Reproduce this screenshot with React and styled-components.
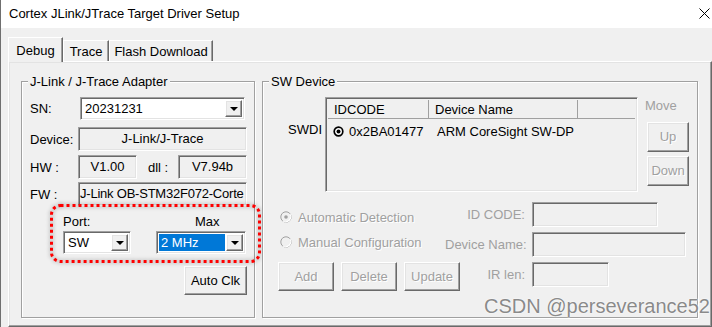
import React from 'react';
import styled, { createGlobalStyle, css } from 'styled-components';

const Global = createGlobalStyle`
  html, body { margin: 0; padding: 0; background: #f0f0f0; }
  body { font-family: "Liberation Sans", Arial, sans-serif; font-size: 13px; color: #000; }
  * { box-sizing: border-box; }
`;

const sunken = css`
  border: 1px solid;
  border-color: #a0a0a0 #ffffff #ffffff #a0a0a0;
  box-shadow: inset 1px 1px 0 #696969, inset -1px -1px 0 #e3e3e3;
`;

const raised = css`
  border: 1px solid;
  border-color: #ffffff #696969 #696969 #ffffff;
  box-shadow: inset -1px -1px 0 #a0a0a0, inset 1px 1px 0 #e3e3e3;
`;

const Window = styled.div`
  position: relative;
  width: 712px;
  height: 327px;
  overflow: hidden;
  background: #f0f0f0;
  border-left: 1px solid #6f6f6f;
  display: flex;
  flex-direction: column;
`;

const TitleBar = styled.div`
  height: 28px;
  flex: none;
  background: #ffffff;
  display: flex;
  align-items: center;
  justify-content: space-between;
  padding: 0 2px 1px 8px;
  font-size: 13px;
  color: #000;
`;

const Body = styled.div`
  flex: 1;
  display: flex;
  flex-direction: column;
  padding: 9px 0 0 7px;
  min-height: 0;
`;

const TabStrip = styled.div`
  height: 24px;
  flex: none;
  display: flex;
  align-items: flex-end;
`;

const Tab = styled.div`
  position: relative;
  z-index: ${p => (p.$active ? 2 : 1)};
  width: ${p => p.$w}px;
  height: ${p => (p.$active ? 25 : 21)}px;
  margin-bottom: ${p => (p.$active ? -1 : 0)}px;
  background: #f0f0f0;
  border: 1px solid;
  border-bottom: none;
  border-color: #ffffff #696969 #696969 #ffffff;
  box-shadow: inset -1px 0 0 #a0a0a0;
  display: flex;
  align-items: center;
  justify-content: center;
  font-size: 13px;
  padding-top: ${p => (p.$active ? 0 : 1)}px;
  white-space: nowrap;
`;

const Panel = styled.div`
  flex: 1;
  border: 1px solid;
  border-color: #ffffff #696969 #696969 #ffffff;
  box-shadow: inset -1px -1px 0 #a0a0a0, inset 1px 1px 0 #e3e3e3;
  padding: 19px 0 0 12px;
  display: flex;
  gap: 7px;
  align-items: flex-start;
`;

const Group = styled.div`
  position: relative;
  width: ${p => p.$w}px;
  height: 237px;
  flex: none;
  border: 1px solid #a0a0a0;
  box-shadow: inset 1px 1px 0 #ffffff, 1px 1px 0 #ffffff;
  padding: ${p => p.$pad};
  display: flex;
  flex-direction: column;
`;

const Legend = styled.span`
  position: absolute;
  top: -8px;
  left: 6px;
  padding: 0 2px;
  line-height: 15px;
  background: #f0f0f0;
  white-space: nowrap;
`;

const Row = styled.div`
  display: flex;
  align-items: center;
  margin-top: ${p => p.$mt || 0}px;
`;

const Label = styled.span`
  flex: none;
  width: ${p => p.$w}px;
  line-height: 15px;
  white-space: nowrap;
  padding-left: ${p => p.$pl || 0}px;
  color: ${p => (p.$dim ? '#a0a0a0' : '#000')};
  text-align: ${p => p.$align || 'left'};
`;

const ReadBox = styled.div`
  ${sunken};
  width: ${p => p.$w}px;
  height: 24px;
  flex: none;
  background: #f0f0f0;
  display: flex;
  align-items: center;
  justify-content: ${p => (p.$left ? 'flex-start' : 'center')};
  padding: 0 ${p => (p.$left ? 1 : 2)}px 2px ${p => (p.$left ? 1 : 2)}px;
  white-space: nowrap;
  overflow: hidden;
  letter-spacing: ${p => (p.$tight ? '-0.22px' : 'normal')};
`;

const Combo = styled.div`
  ${sunken};
  width: ${p => p.$w}px;
  height: 23px;
  flex: none;
  background: #ffffff;
  display: flex;
  align-items: stretch;
  padding: 2px;
`;

const ComboText = styled.div`
  flex: 1;
  display: flex;
  align-items: center;
  padding: 0 2px;
  margin-right: 1px;
  background: ${p => (p.$selected ? '#0078d7' : 'transparent')};
  color: ${p => (p.$selected ? '#ffffff' : '#000')};
  white-space: nowrap;
  overflow: hidden;
`;

const DropButton = styled.div`
  ${raised};
  width: 17px;
  flex: none;
  background: #f0f0f0;
  display: flex;
  align-items: center;
  justify-content: center;
`;

const Arrow = styled.span`
  width: 0;
  height: 0;
  border-left: 4px solid transparent;
  border-right: 4px solid transparent;
  border-top: 4px solid #000;
`;

const PortArea = styled.div`
  display: flex;
  gap: 25px;
  margin-top: 8px;
  padding-left: 33px;
`;

const PortCol = styled.div`
  display: flex;
  flex-direction: column;
  gap: 2px;
`;

const Button = styled.button`
  ${raised};
  width: ${p => p.$w}px;
  height: ${p => p.$h}px;
  flex: none;
  margin: ${p => p.$m || 0};
  align-self: ${p => p.$self || 'auto'};
  padding: 0 0 1px 0;
  background: #f0f0f0;
  font: 13px "Liberation Sans", Arial, sans-serif;
  color: ${p => (p.disabled ? '#a0a0a0' : '#000')};
  text-shadow: ${p => (p.disabled ? '1px 1px 0 #ffffff' : 'none')};
`;

const Annotation = styled.svg`
  position: absolute;
  left: 28px;
  top: 122px;
  overflow: visible;
  filter: drop-shadow(0 0 2px rgba(0, 0, 0, 0.45));
  pointer-events: none;
`;

const TopSection = styled.div`
  display: flex;
  align-items: flex-start;
`;

const SideLabel = styled.span`
  width: 59px;
  flex: none;
  text-align: right;
  padding-top: 25px;
  line-height: 15px;
`;

const List = styled.div`
  ${sunken};
  width: 313px;
  height: 95px;
  margin-left: 3px;
  flex: none;
  background: #f0f0f0;
  padding: 2px;
  display: flex;
  flex-direction: column;
`;

const ListHeader = styled.div`
  display: flex;
  height: 19px;
  border-bottom: 1px solid #a0a0a0;
`;

const HeadCell = styled.div`
  width: ${p => (p.$w ? `${p.$w}px` : 'auto')};
  flex: ${p => (p.$w ? 'none' : '1')};
  border-right: ${p => (p.$last ? 'none' : '1px solid #a0a0a0')};
  padding-left: 6px;
  display: flex;
  align-items: center;
  white-space: nowrap;
`;

const ListRow = styled.div`
  display: flex;
  height: 18px;
  margin-top: 3px;
  align-items: center;
`;

const Cell = styled.div`
  width: ${p => p.$w}px;
  flex: none;
  display: flex;
  align-items: center;
  gap: 5px;
  padding-left: ${p => p.$pl}px;
  white-space: nowrap;
`;

const MoveCol = styled.div`
  display: flex;
  flex-direction: column;
  align-items: flex-start;
  margin-left: 7px;
  padding-top: 1px;
`;

const MoveLabel = styled.span`
  line-height: 15px;
  color: #a0a0a0;
`;

const BottomSection = styled.div`
  display: flex;
  margin-top: 10px;
`;

const OptionsCol = styled.div`
  width: 182px;
  flex: none;
  padding: 5px 0 0 15px;
  display: flex;
  flex-direction: column;
`;

const RadioRow = styled.label`
  height: 20px;
  margin-bottom: 5px;
  padding-left: 2px;
  display: flex;
  align-items: center;
  gap: 6px;
  color: #a0a0a0;
  text-shadow: 1px 1px 0 #ffffff;
  white-space: nowrap;
`;

const ButtonRow = styled.div`
  display: flex;
  gap: 7px;
  margin-top: 5px;
`;

const FieldGrid = styled.div`
  display: grid;
  grid-template-columns: 80px auto;
  grid-auto-rows: 25px;
  column-gap: 7px;
  row-gap: 5px;
  align-items: center;
`;

const FieldBox = styled.div`
  ${sunken};
  width: ${p => p.$w}px;
  height: 25px;
  background: #f0f0f0;
`;

const Watermark = styled.div`
  position: absolute;
  left: 483px;
  top: 295px;
  font: 20px "Liberation Sans", Arial, sans-serif;
  line-height: 22px;
  color: #8a8a8a;
  text-shadow: 0 0 2px #ffffff, 0 0 1px #ffffff;
  white-space: nowrap;
  pointer-events: none;
`;

function CloseIcon() {
  return (
    <svg width="11" height="11" viewBox="0 0 11 11">
      <path d="M0.5 0.5 L10.5 10.5 M10.5 0.5 L0.5 10.5" stroke="#000" strokeWidth="1" fill="none" />
    </svg>
  );
}

function ListRadio() {
  return (
    <svg width="11" height="11" viewBox="0 0 11 11">
      <circle cx="5.5" cy="5.5" r="4.3" stroke="#000" strokeWidth="1.7" fill="#fff" />
      <circle cx="5.5" cy="5.5" r="2" fill="#000" />
    </svg>
  );
}

function DimRadio({ checked }) {
  return (
    <svg width="12" height="12" viewBox="0 0 12 12">
      <circle cx="6" cy="6" r="5.2" fill="#f0f0f0" stroke="#a0a0a0" strokeWidth="1" />
      <path d="M10.2 3.2 A5.2 5.2 0 0 1 3.2 10.2" stroke="#ffffff" strokeWidth="1.2" fill="none" />
      {checked && <circle cx="6" cy="6" r="1.8" fill="#a0a0a0" />}
    </svg>
  );
}

function ComboBox({ w, text, selected }) {
  return (
    <Combo $w={w}>
      <ComboText $selected={selected}>{text}</ComboText>
      <DropButton>
        <Arrow />
      </DropButton>
    </Combo>
  );
}

export default function App() {
  return (
    <>
      <Global />
      <Window>
        <TitleBar>
          <span>Cortex JLink/JTrace Target Driver Setup</span>
          <CloseIcon />
        </TitleBar>
        <Body>
          <TabStrip>
            <Tab $active $w={55}>Debug</Tab>
            <Tab $w={46}>Trace</Tab>
            <Tab $w={104}>Flash Download</Tab>
          </TabStrip>
          <Panel>
            <Group $w={234} $pad="15px 0 0 8px">
              <Legend>J-Link / J-Trace Adapter</Legend>
              <Row>
                <Label $w={50}>SN:</Label>
                <ComboBox w={165} text="20231231" />
              </Row>
              <Row $mt={7}>
                <Label $w={48}>Device:</Label>
                <ReadBox $w={169}>J-Link/J-Trace</ReadBox>
              </Row>
              <Row $mt={4}>
                <Label $w={48}>HW :</Label>
                <ReadBox $w={59}>V1.00</ReadBox>
                <Label $w={41} $pl={11}>dll :</Label>
                <ReadBox $w={69}>V7.94b</ReadBox>
              </Row>
              <Row $mt={3}>
                <Label $w={48}>FW :</Label>
                <ReadBox $w={169} $left $tight>J-Link OB-STM32F072-Corte</ReadBox>
              </Row>
              <PortArea>
                <PortCol>
                  <Label>Port:</Label>
                  <ComboBox w={68} text="SW" />
                </PortCol>
                <PortCol>
                  <Label $pl={39}>Max</Label>
                  <ComboBox w={90} text="2 MHz" selected />
                </PortCol>
              </PortArea>
              <Button $w={63} $h={29} $m="12px 7px 0 0" $self="flex-end">Auto Clk</Button>
              <Annotation width="211" height="59" viewBox="0 0 211 59">
                <rect
                  x="1.5"
                  y="1.5"
                  width="208"
                  height="56"
                  rx="9"
                  fill="none"
                  stroke="#ff0000"
                  strokeWidth="3"
                  strokeDasharray="3 3"
                />
              </Annotation>
            </Group>
            <Group $w={436} $pad="15px 0 0 0">
              <Legend>SW Device</Legend>
              <TopSection>
                <SideLabel>SWDI</SideLabel>
                <List>
                  <ListHeader>
                    <HeadCell $w={101}>IDCODE</HeadCell>
                    <HeadCell $w={149}>Device Name</HeadCell>
                    <HeadCell $last />
                  </ListHeader>
                  <ListRow>
                    <Cell $w={101} $pl={5}>
                      <ListRadio />
                      <span>0x2BA01477</span>
                    </Cell>
                    <Cell $w={200} $pl={8}>ARM CoreSight SW-DP</Cell>
                  </ListRow>
                </List>
                <MoveCol>
                  <MoveLabel>Move</MoveLabel>
                  <Button disabled $w={42} $h={30} $m="9px 0 0 2px">Up</Button>
                  <Button disabled $w={42} $h={30} $m="4px 0 0 2px">Down</Button>
                </MoveCol>
              </TopSection>
              <BottomSection>
                <OptionsCol>
                  <RadioRow>
                    <DimRadio checked />
                    <span>Automatic Detection</span>
                  </RadioRow>
                  <RadioRow>
                    <DimRadio />
                    <span>Manual Configuration</span>
                  </RadioRow>
                  <ButtonRow>
                    <Button disabled $w={56} $h={29}>Add</Button>
                    <Button disabled $w={56} $h={29}>Delete</Button>
                    <Button disabled $w={56} $h={29}>Update</Button>
                  </ButtonRow>
                </OptionsCol>
                <FieldGrid>
                  <Label $dim $align="right">ID CODE:</Label>
                  <FieldBox $w={126} />
                  <Label $dim $align="right">Device Name:</Label>
                  <FieldBox $w={154} />
                  <Label $dim $align="right">IR len:</Label>
                  <FieldBox $w={77} />
                </FieldGrid>
              </BottomSection>
            </Group>
          </Panel>
        </Body>
        <Watermark>CSDN @perseverance52</Watermark>
      </Window>
    </>
  );
}
